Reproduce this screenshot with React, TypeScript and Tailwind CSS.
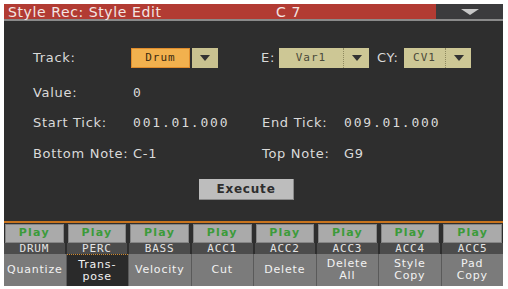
import React from "react";

const tracks = ["DRUM", "PERC", "BASS", "ACC1", "ACC2", "ACC3", "ACC4", "ACC5"];
const tabs: { top: string; bottom?: string; active?: boolean }[] = [
  { top: "Quantize" },
  { top: "Trans-", bottom: "pose", active: true },
  { top: "Velocity" },
  { top: "Cut" },
  { top: "Delete" },
  { top: "Delete", bottom: "All" },
  { top: "Style", bottom: "Copy" },
  { top: "Pad", bottom: "Copy" },
];

function Arrow({ color = "#333" }: { color?: string }) {
  return (
    <svg width="10" height="6" viewBox="0 0 10 6">
      <path d="M0 0 L10 0 L5 6 Z" fill={color} />
    </svg>
  );
}

/** Khaki select box with a dotted divider before its arrow. */
function Select({ value, width }: { value: string; width: string }) {
  return (
    <div className={"flex h-[20px] items-stretch bg-[#cdc795] " + width}>
      <span className="flex flex-1 items-center justify-center font-['DejaVu_Sans_Mono'] text-[11px] tracking-[1px] text-[#4a4a3a]">{value}</span>
      <span className="flex w-[26px] items-center justify-center border-l border-dotted border-[#8f8a60]">
        <Arrow />
      </span>
    </div>
  );
}

function Row({ children, className = "" }: { children: React.ReactNode; className?: string }) {
  return <div className={"flex h-[20px] items-center text-[13px] tracking-[0.7px] text-[#dadada] " + className}>{children}</div>;
}

const mono = "font-['DejaVu_Sans_Mono'] text-[13px] tracking-[1.8px]";

export default function App() {
  return (
    <div className="h-[289px] w-[508px] bg-white pl-[4px] pt-[4px]" style={{ fontFamily: '"DejaVu Sans", sans-serif' }}>
      <div className="flex h-[282px] w-[499px] flex-col bg-[#2e2e2e]">
        <div className="flex h-[17px] items-stretch border-b-2 border-[#8a8a8a]">
          <div className="flex flex-1 items-center bg-[#b23b33] text-[14px] leading-none tracking-[0.6px] text-[#f4e6e4]">
            <span className="ml-[4px] w-[268px]">Style Rec: Style Edit</span>
            <span>C 7</span>
          </div>
          <div className="flex w-[67px] items-center justify-center bg-[#3b3b3d]">
            <svg width="18" height="6" viewBox="0 0 18 6">
              <path d="M0 0 L18 0 L9 6 Z" fill="#c8c8c8" />
            </svg>
          </div>
        </div>

        <div className="flex flex-1 flex-col pl-[29px] pt-[27px]">
          <Row>
            <span className="w-[98px]">Track:</span>
            <div className="flex h-[20px] w-[59px] items-center justify-center border border-[#e08c2c] bg-[#f2b14e] font-['DejaVu_Sans_Mono'] text-[11px] tracking-[1px] text-[#3a2a10]">Drum</div>
            <div className="ml-[2px] flex h-[20px] w-[26px] items-center justify-center bg-[#c9c290]">
              <Arrow />
            </div>
            <span className="ml-[43px] w-[18px]">E:</span>
            <Select value="Var1" width="w-[90px]" />
            <span className="ml-[8px] w-[27px]">CY:</span>
            <Select value="CV1" width="w-[67px]" />
          </Row>
          <Row className="mt-[15px]">
            <span className="w-[100px]">Value:</span>
            <span className={mono}>0</span>
          </Row>
          <Row className="mt-[10px]">
            <span className="w-[100px]">Start Tick:</span>
            <span className={"w-[129px] " + mono}>001.01.000</span>
            <span className="w-[82px]">End Tick:</span>
            <span className={mono}>009.01.000</span>
          </Row>
          <Row className="mt-[11px]">
            <span className="w-[100px]">Bottom Note:</span>
            <span className="w-[129px]">C-1</span>
            <span className="w-[82px]">Top Note:</span>
            <span>G9</span>
          </Row>
          <div className="ml-[166px] mt-[15px] flex h-[21px] w-[95px] items-center justify-center border-b border-r border-[#8a8a8a] bg-[#bdbdbd] text-[12px] font-bold tracking-[0.8px] text-[#2e2e2e]">Execute</div>
        </div>

        <div className="border-t-2 border-[#c8741e]">
          <div className="grid grid-cols-8 gap-x-[4px] px-[1px] pt-[1px]">
            {tracks.map((t) => (
              <div key={t} className="flex h-[19px] items-center justify-center border border-[#858585] bg-[#aaaaaa] text-[11px] font-bold tracking-[1.2px] text-[#3c9b3a]">Play</div>
            ))}
          </div>
          <div className="grid grid-cols-8 gap-x-[2px] bg-[#2e2e2e]">
            {tracks.map((t) => (
              <div key={t} className="flex h-[11px] items-center justify-center bg-[#4c4c4c] font-['DejaVu_Sans_Mono'] text-[11px] leading-none tracking-[0.8px] text-[#e4e4e4]">{t}</div>
            ))}
          </div>
          <div className="grid h-[32px] grid-cols-8 gap-x-[1px] bg-[#5a5a5a]">
            {tabs.map((t, i) => (
              <div
                key={i}
                className={
                  "flex flex-col items-center justify-center text-[11px] leading-[12px] tracking-[0.8px] text-[#f2f2f2] " +
                  (t.active ? "border-t border-dotted border-[#d08a30] bg-[#2a2a2a]" : "bg-[#7b7b7b]")
                }
              >
                <span>{t.top}</span>
                {t.bottom && <span>{t.bottom}</span>}
              </div>
            ))}
          </div>
        </div>
      </div>
    </div>
  );
}
